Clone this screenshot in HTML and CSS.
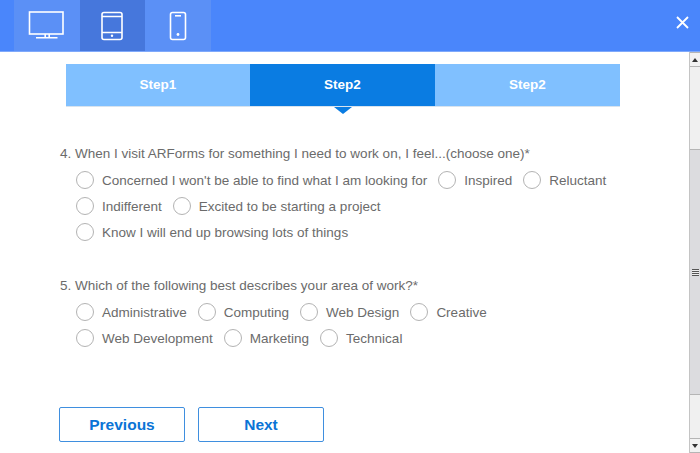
FILE: index.html
```html
<!DOCTYPE html>
<html lang="en">
<head>
    <meta charset="UTF-8">
    <title>Form preview</title>
    <link rel="stylesheet" href="styles.css">
</head>
<body>
    <div class="topbar">
        <div class="devices">
            <div class="device">
                <svg width="38" height="30" viewBox="0 0 38 30" fill="none" stroke="#fff" stroke-width="1.6">
                    <rect x="1.500" y="1" width="33.500" height="22"/>
                    <path d="M17.200 23v3.500M21.200 23v3.500M8 26.700h21.500"/>
                </svg>
            </div>
            <div class="device active">
                <svg width="24" height="30" viewBox="0 0 24 30" fill="none" stroke="#fff" stroke-width="1.6">
                    <rect x="2" y="1.500" width="20" height="27" rx="2"/>
                    <path d="M2 5.500h20M2 21.500h20"/>
                    <circle cx="12" cy="24.800" r="1.200" fill="#fff" stroke="none"/>
                </svg>
            </div>
            <div class="device">
                <svg width="18" height="30" viewBox="0 0 18 30" fill="none" stroke="#fff" stroke-width="1.6">
                    <rect x="1.500" y="1.500" width="15" height="27" rx="2"/>
                    <path d="M6 4.800h6"/>
                    <circle cx="9" cy="23.500" r="1.400" fill="#fff" stroke="none"/>
                </svg>
            </div>
        </div>
        <svg class="close" width="13" height="13" viewBox="0 0 13 13" fill="none" stroke="#fff" stroke-width="1.800">
            <path d="M1 1l11 11M12 1L1 12"/>
        </svg>
    </div>

    <div class="content">
        <div class="page">
            <ul class="steps">
                <li>Step1</li>
                <li class="current">Step2</li>
                <li>Step2</li>
            </ul>

            <form class="form">
                <div class="question">
                    <p class="title">4. When I visit ARForms for something I need to work on, I feel...(choose one)*</p>
                    <div class="options">
                        <div class="row">
                            <label><span class="radio"></span>Concerned I won't be able to find what I am looking for</label>
                            <label><span class="radio"></span>Inspired</label>
                            <label><span class="radio"></span>Reluctant</label>
                        </div>
                        <div class="row">
                            <label><span class="radio"></span>Indifferent</label>
                            <label><span class="radio"></span>Excited to be starting a project</label>
                        </div>
                        <div class="row">
                            <label><span class="radio"></span>Know I will end up browsing lots of things</label>
                        </div>
                    </div>
                </div>

                <div class="question">
                    <p class="title">5. Which of the following best describes your area of work?*</p>
                    <div class="options">
                        <div class="row">
                            <label><span class="radio"></span>Administrative</label>
                            <label><span class="radio"></span>Computing</label>
                            <label><span class="radio"></span>Web Design</label>
                            <label><span class="radio"></span>Creative</label>
                        </div>
                        <div class="row">
                            <label><span class="radio"></span>Web Development</label>
                            <label><span class="radio"></span>Marketing</label>
                            <label><span class="radio"></span>Technical</label>
                        </div>
                    </div>
                </div>

                <div class="buttons">
                    <button type="button">Previous</button>
                    <button type="button">Next</button>
                </div>
            </form>
        </div>

        <div class="scrollbar">
            <div class="arrow"><span class="up"></span></div>
            <div class="track">
                <div class="thumb"><span class="grip"></span></div>
            </div>
            <div class="arrow"><span class="down"></span></div>
        </div>
    </div>
</body>
</html>
```

FILE: styles.css
```css
*{
    margin: 0;
    padding: 0;
    box-sizing: border-box;
    font-family: "Liberation Sans", Arial, sans-serif;
}

html, body{
    height: 453px;
    overflow: hidden;
}

body{
    background-color: #fff;
}

/* barra de cima */
.topbar{
    height: 52px;
    padding: 0 11px 0 14px;
    background-color: #4a86fb;
    border-bottom: 1px solid #7fa9fb;
    display: flex;
    align-items: flex-start;
    justify-content: space-between;
}

.devices{
    display: flex;
    height: 51px;
}

.device{
    width: 65.500px;
    display: flex;
    align-items: center;
    justify-content: center;
    background-color: #5b90f6;
}

.device.active{
    background-color: #4677dc;
}

.close{
    margin-top: 16px;
}

/* area com scroll */
.content{
    height: 401px;
    display: flex;
}

.page{
    width: 689px;
}

.steps{
    list-style: none;
    display: grid;
    grid-template-columns: 184px 185px 185px;
    width: 554px;
    height: 43px;
    margin: 12px 0 0 66px;
    background-color: #80c0ff;
    border-bottom: 1px solid #d8e3ee;
}

.steps li{
    height: 42px;
    line-height: 41px;
    text-align: center;
    color: #fff;
    font-size: 13.500px;
    font-weight: bold;
    background-color: #80c0ff;
    position: relative;
}

.steps li.current{
    background-color: #0a7ce2;
}

.steps li.current::after{
    content: "";
    position: absolute;
    left: 50%;
    top: 43px;
    margin-left: -9px;
    border-style: solid;
    border-width: 7px 9px 0 9px;
    border-color: #0a7ce2 transparent transparent transparent;
}

.form{
    padding: 39px 0 0 60px;
}

.question{
    margin-bottom: 33px;
}

.title{
    font-size: 13.500px;
    line-height: 16px;
    color: #6b6b6b;
}

.options{
    padding: 5px 0 0 16px;
}

.row{
    display: flex;
    gap: 11px;
    height: 26px;
}

.row label{
    display: flex;
    align-items: center;
    font-size: 13.500px;
    color: #6b6b6b;
}

.radio{
    width: 18px;
    height: 18px;
    margin-right: 8px;
    border: 1px solid #b3b3b3;
    border-radius: 50%;
    background-color: #fff;
}

.buttons{
    display: flex;
    gap: 13px;
    margin: 56px 0 0 -1px;
}

button{
    width: 126px;
    height: 35px;
    background-color: #fff;
    border: 1px solid #3f8fdf;
    border-radius: 2px;
    color: #0a74d6;
    font-size: 15.500px;
    font-weight: bold;
    font-family: "Liberation Sans", Arial, sans-serif;
}

/* scrollbar antiga */
.scrollbar{
    width: 11px;
    height: 401px;
    display: flex;
    flex-direction: column;
    background-color: #f0f0f0;
    border-left: 1px solid #c4c4c4;
}

.arrow{
    height: 15px;
    background-color: #f2f2f2;
    border-bottom: 1px solid #b5b5b5;
    border-top: 1px solid #b5b5b5;
    display: flex;
    align-items: center;
    justify-content: center;
}

.up, .down{
    border-style: solid;
    border-color: transparent;
    border-width: 0 3px;
}

.up{
    border-bottom: 4px solid #333;
}

.down{
    border-top: 4px solid #333;
}

.track{
    flex: 1;
    padding-top: 82px;
}

.thumb{
    height: 246px;
    background-color: #dcdcdf;
    border-top: 1px solid #b5b5b5;
    border-bottom: 1px solid #b5b5b5;
    display: flex;
    align-items: center;
    justify-content: center;
}

.grip{
    width: 7px;
    height: 7px;
    background: repeating-linear-gradient(#555 0, #555 1px, #eee 1px, #eee 2px);
}
```
